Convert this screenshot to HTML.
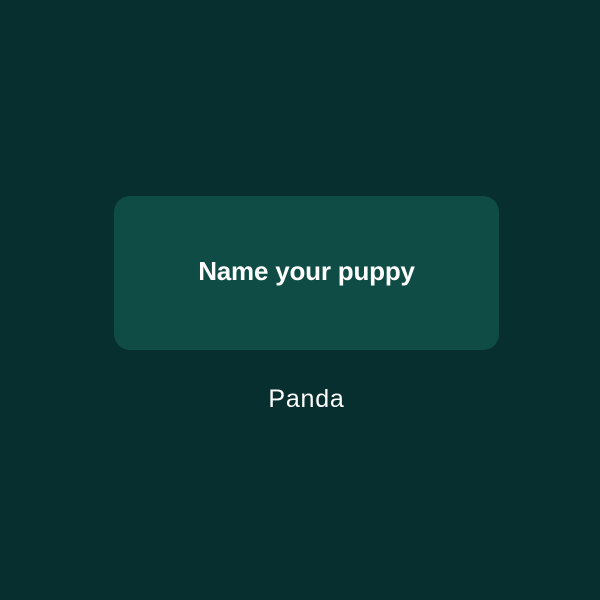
<!DOCTYPE html>
<html><head><style>
html,body{margin:0;padding:0}
body{width:600px;height:600px;background:#082f30;position:relative;overflow:hidden;font-family:"Liberation Sans",sans-serif}
.box{position:absolute;left:114px;top:196px;width:385px;height:154px;background:#0f4c45;border-radius:16px}
.t{position:absolute;left:114px;width:385px;top:256px;text-align:center;color:#fff;font-size:26px;font-weight:bold;letter-spacing:-0.2px}
.p{position:absolute;left:114px;width:385px;top:385px;text-align:center;color:#fff;font-size:25px;font-weight:normal;letter-spacing:0.8px}
</style></head><body>
<div class="box"></div>
<div class="t">Name your puppy</div>
<div class="p">Panda</div>
</body></html>
